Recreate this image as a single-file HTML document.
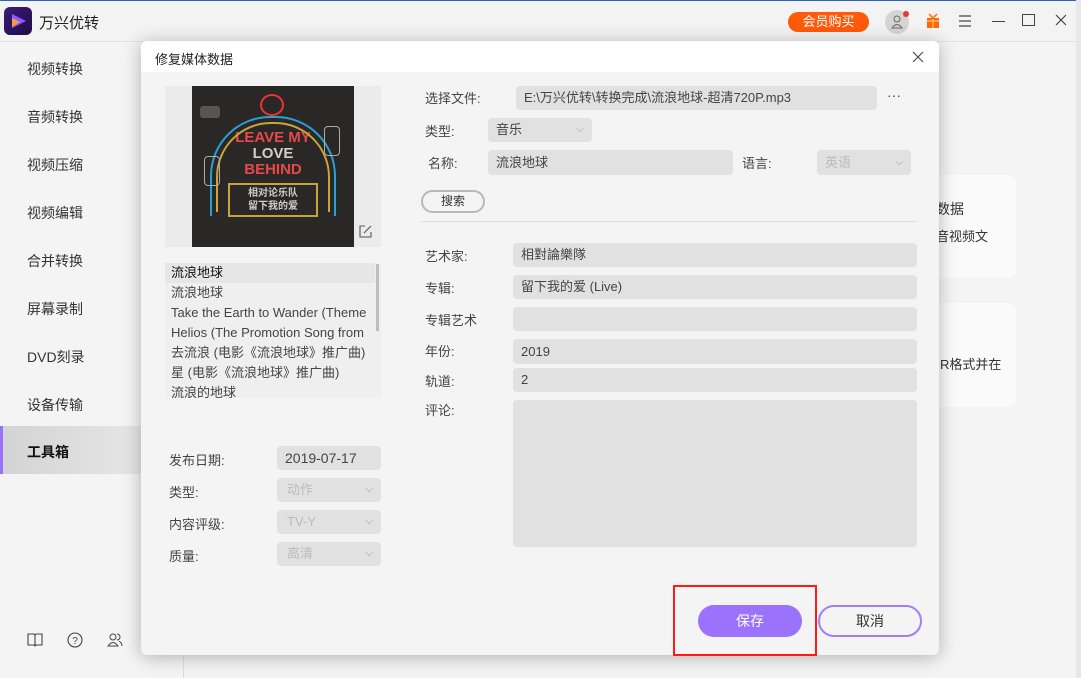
<!DOCTYPE html>
<html><head><meta charset="utf-8"><style>
*{margin:0;padding:0;box-sizing:border-box}
body{width:1081px;height:678px;overflow:hidden;background:#f4f4f4;font-family:"Liberation Sans","Noto Sans CJK SC",sans-serif;position:relative;color:#333}
.a{position:absolute}
.nav{left:27px;font-size:14px;color:#333;line-height:20px}
.lbl{font-size:13px;color:#444;line-height:18px}
.in{background:#e1e1e1;border-radius:4px;font-size:13px;color:#444;padding-left:8px;line-height:24px;height:24px}
.dis{color:#bbb}
.chev{position:absolute;right:8px;top:0;font-size:10px;color:#999}
</style></head><body>
<div class="a" style="left:0;top:0;width:1081px;height:1px;background:#2a62b8"></div>
<div class="a" style="left:0;top:1px;width:1081px;height:41px;background:#f3f3f3;border-bottom:1px solid #e2e2e2"></div>
<div class="a" style="left:4px;top:7px;width:28px;height:28px;border-radius:6px;background:linear-gradient(135deg,#3b1b7a,#1e0c45)"></div>
<svg class="a" style="left:9px;top:12px" width="20" height="18"><path d="M3 2 L17 9 L3 16 Z" fill="#8a5cff"/><path d="M3 6 L11 10 L3 15 Z" fill="#ff9a3c"/></svg>
<div class="a" style="left:39px;top:12px;font-size:15px;color:#222">万兴优转</div>
<div class="a" style="left:788px;top:12px;width:81px;height:20px;border-radius:10px;background:#ff5a0a;color:#fff;font-size:13px;text-align:center;line-height:20px">会员购买</div>
<div class="a" style="left:885px;top:10px;width:24px;height:24px;border-radius:50%;background:#d4d4d4"></div>
<svg class="a" style="left:891px;top:15px" width="12" height="14"><circle cx="6" cy="4" r="3" fill="none" stroke="#666"/><path d="M1 13 Q6 6 11 13 Z" fill="none" stroke="#666"/></svg>
<div class="a" style="left:903px;top:11px;width:6px;height:6px;border-radius:50%;background:#e53935"></div>
<svg class="a" style="left:925px;top:13px" width="16" height="16"><rect x="2" y="5" width="12" height="10" fill="#ff6a00"/><path d="M8 5V15M2 8H14" stroke="#ffd0a0"/><path d="M4 1L8 5L12 1" stroke="#ff6a00" fill="none" stroke-width="1.5"/></svg>
<svg class="a" style="left:958px;top:15px" width="14" height="12"><path d="M1 1H13M1 6H13M1 11H13" stroke="#444" stroke-width="1.3"/></svg>
<div class="a" style="left:992px;top:21px;width:13px;height:1.3px;background:#444"></div>
<div class="a" style="left:1022px;top:14px;width:13px;height:12px;border:1.3px solid #444"></div>
<svg class="a" style="left:1055px;top:14px" width="12" height="12"><path d="M1 1L11 11M11 1L1 11" stroke="#444" stroke-width="1.2"/></svg>
<div class="nav a" style="top:59px">视频转换</div>
<div class="nav a" style="top:107px">音频转换</div>
<div class="nav a" style="top:155px">视频压缩</div>
<div class="nav a" style="top:203px">视频编辑</div>
<div class="nav a" style="top:251px">合并转换</div>
<div class="nav a" style="top:299px">屏幕录制</div>
<div class="nav a" style="top:347px">DVD刻录</div>
<div class="nav a" style="top:395px">设备传输</div>
<div class="a" style="left:0;top:426px;width:141px;height:48px;background:linear-gradient(90deg,#d3d3d3,#e6e6e6)"></div>
<div class="a" style="left:0;top:426px;width:3px;height:48px;background:#9b72fb"></div>
<div class="nav a" style="top:442px;font-weight:bold;color:#111">工具箱</div>
<svg class="a" style="left:27px;top:632px" width="16" height="16"><path d="M1 2H7L8 3L9 2H15V13H9L8 14L7 13H1Z M8 3V14" fill="none" stroke="#444" stroke-width="1.1"/></svg>
<svg class="a" style="left:67px;top:632px" width="16" height="16"><circle cx="8" cy="8" r="7" fill="none" stroke="#444" stroke-width="1.1"/><text x="8" y="12" font-size="10" text-anchor="middle" fill="#444">?</text></svg>
<svg class="a" style="left:107px;top:632px" width="16" height="16"><circle cx="6" cy="5" r="3" fill="none" stroke="#444"/><path d="M1 14Q6 7 11 14Z" fill="none" stroke="#444"/><path d="M10 2A3 3 0 0 1 10 8M12 9Q15 11 15 14" fill="none" stroke="#444"/></svg>
<div class="a" style="left:183px;top:655px;width:1px;height:23px;background:#ddd"></div>
<div class="a" style="left:900px;top:175px;width:116px;height:103px;background:#fafafa;border-radius:8px"></div>
<div class="a" style="left:900px;top:303px;width:116px;height:104px;background:#fafafa;border-radius:8px"></div>
<div class="a" style="left:936px;top:199px;font-size:14px">数据</div>
<div class="a" style="left:936px;top:226px;font-size:13px">音视频文</div>
<div class="a" style="left:940px;top:354px;font-size:13px">R格式并在</div>
<div class="a" style="left:1076px;top:0;width:5px;height:678px;background:#e8e8e8"></div>
<div class="a" style="left:141px;top:41px;width:798px;height:614px;background:#f4f4f4;border-radius:6px;box-shadow:0 2px 18px rgba(0,0,0,.28);overflow:hidden">
 <div class="a" style="left:0;top:0;width:798px;height:31px;background:#fff"></div>
</div>
<div class="a" style="left:155px;top:49px;font-size:13px;color:#222">修复媒体数据</div>
<svg class="a" style="left:912px;top:51px" width="12" height="12"><path d="M1 1L11 11M11 1L1 11" stroke="#444" stroke-width="1.1"/></svg>
<div class="a" style="left:165px;top:86px;width:216px;height:161px;background:#ebebeb"></div>
<div class="a" style="left:192px;top:86px;width:162px;height:161px;background:#2a2826;overflow:hidden;text-align:center;font-weight:bold;line-height:16px">
 <div class="a" style="left:18px;top:30px;width:126px;height:100px;border:2px solid #2a9fd6;border-radius:60px 60px 0 0;border-bottom:none"></div>
 <div class="a" style="left:24px;top:36px;width:114px;height:90px;border:2px solid #c9a43a;border-radius:55px 55px 0 0;border-bottom:none"></div>
 <div class="a" style="left:68px;top:8px;width:24px;height:22px;border:2px solid #e33;border-radius:50%"></div>
 <div style="margin-top:44px;color:#e84848;font-size:15px">LEAVE MY</div>
 <div style="color:#cfcfcf;font-size:15px">LOVE</div>
 <div style="color:#e84848;font-size:15px">BEHIND</div>
 <div style="margin:5px auto 0;width:90px;border:2px solid #c9a43a;color:#ccc;font-size:10px;line-height:13px;padding:2px">相对论乐队<br>留下我的爱</div>
 <div class="a" style="left:8px;top:20px;width:20px;height:12px;background:#555;border-radius:3px"></div>
 <div class="a" style="left:132px;top:40px;width:16px;height:30px;border:1px solid #aaa;border-radius:4px"></div>
 <div class="a" style="left:12px;top:70px;width:16px;height:30px;border:1px solid #aaa;border-radius:4px"></div>
</div>
<svg class="a" style="left:359px;top:225px" width="13" height="13"><path d="M6 1H1V12H12V7M5 8L12 1" fill="none" stroke="#555" stroke-width="1.1"/></svg>
<div class="a" style="left:165px;top:263px;width:216px;height:135px;background:#efefef;overflow:hidden;font-size:13px;line-height:20px;color:#444">
 <div style="background:#e6e6e6;width:210px;padding-left:6px;color:#111">流浪地球</div>
 <div style="padding-left:6px;white-space:nowrap">流浪地球</div>
 <div style="padding-left:6px;white-space:nowrap">Take the Earth to Wander (Theme</div>
 <div style="padding-left:6px;white-space:nowrap">Helios (The Promotion Song from</div>
 <div style="padding-left:6px;white-space:nowrap">去流浪 (电影《流浪地球》推广曲)</div>
 <div style="padding-left:6px;white-space:nowrap">星 (电影《流浪地球》推广曲)</div>
 <div style="padding-left:6px;white-space:nowrap">流浪的地球</div>
 <div class="a" style="left:210px;top:0;width:6px;height:135px;background:#efefef"></div>
 <div class="a" style="left:211px;top:1px;width:3px;height:67px;background:#bdbdbd"></div>
</div>
<div class="lbl a" style="left:169px;top:452px">发布日期:</div>
<div class="in a" style="left:277px;top:446px;width:104px;font-size:14px">2019-07-17</div>
<div class="lbl a" style="left:169px;top:484px">类型:</div>
<div class="in a dis" style="left:277px;top:478px;width:104px;padding-left:10px">动作<span class="chev">⌵</span></div>
<div class="lbl a" style="left:169px;top:516px">内容评级:</div>
<div class="in a dis" style="left:277px;top:510px;width:104px;padding-left:10px">TV-Y<span class="chev">⌵</span></div>
<div class="lbl a" style="left:169px;top:548px">质量:</div>
<div class="in a dis" style="left:277px;top:542px;width:104px;padding-left:10px">高清<span class="chev">⌵</span></div>
<div class="lbl a" style="left:425px;top:90px">选择文件:</div>
<div class="in a" style="left:516px;top:86px;width:361px">E:\万兴优转\转换完成\流浪地球-超清720P.mp3</div>
<div class="a" style="left:887px;top:87px;font-size:14px;color:#444">···</div>
<div class="lbl a" style="left:425px;top:123px">类型:</div>
<div class="in a" style="left:488px;top:118px;width:104px">音乐<span class="chev">⌵</span></div>
<div class="lbl a" style="left:428px;top:155px">名称:</div>
<div class="in a" style="left:488px;top:150px;width:245px;height:25px;line-height:25px">流浪地球</div>
<div class="lbl a" style="left:742px;top:155px">语言:</div>
<div class="in a dis" style="left:817px;top:150px;width:94px;height:25px;line-height:25px">英语<span class="chev">⌵</span></div>
<div class="a" style="left:421px;top:190px;width:64px;height:23px;border:2px solid #b8b8b8;border-radius:12px;font-size:12px;text-align:center;line-height:19px;color:#333">搜索</div>
<div class="a" style="left:421px;top:221px;width:496px;height:1px;background:#dcdcdc"></div>
<div class="lbl a" style="left:425px;top:248px">艺术家:</div>
<div class="in a" style="left:513px;top:243px;width:404px">相對論樂隊</div>
<div class="lbl a" style="left:425px;top:280px">专辑:</div>
<div class="in a" style="left:513px;top:275px;width:404px">留下我的爱 (Live)</div>
<div class="lbl a" style="left:425px;top:312px">专辑艺术</div>
<div class="in a" style="left:513px;top:307px;width:404px"></div>
<div class="lbl a" style="left:425px;top:343px">年份:</div>
<div class="in a" style="left:513px;top:339px;width:404px;height:25px;line-height:25px">2019</div>
<div class="lbl a" style="left:425px;top:373px">轨道:</div>
<div class="in a" style="left:513px;top:368px;width:404px">2</div>
<div class="lbl a" style="left:425px;top:402px">评论:</div>
<div class="in a" style="left:513px;top:400px;width:404px;height:147px"></div>
<div class="a" style="left:698px;top:605px;width:104px;height:32px;border-radius:16px;background:#9b72fb;color:#fff;font-size:14px;text-align:center;line-height:32px">保存</div>
<div class="a" style="left:818px;top:605px;width:104px;height:32px;border-radius:16px;border:2px solid #a37cfb;color:#333;font-size:14px;text-align:center;line-height:28px">取消</div>
<div class="a" style="left:673px;top:585px;width:144px;height:71px;border:2px solid #ff1a1a"></div>
</body></html>
